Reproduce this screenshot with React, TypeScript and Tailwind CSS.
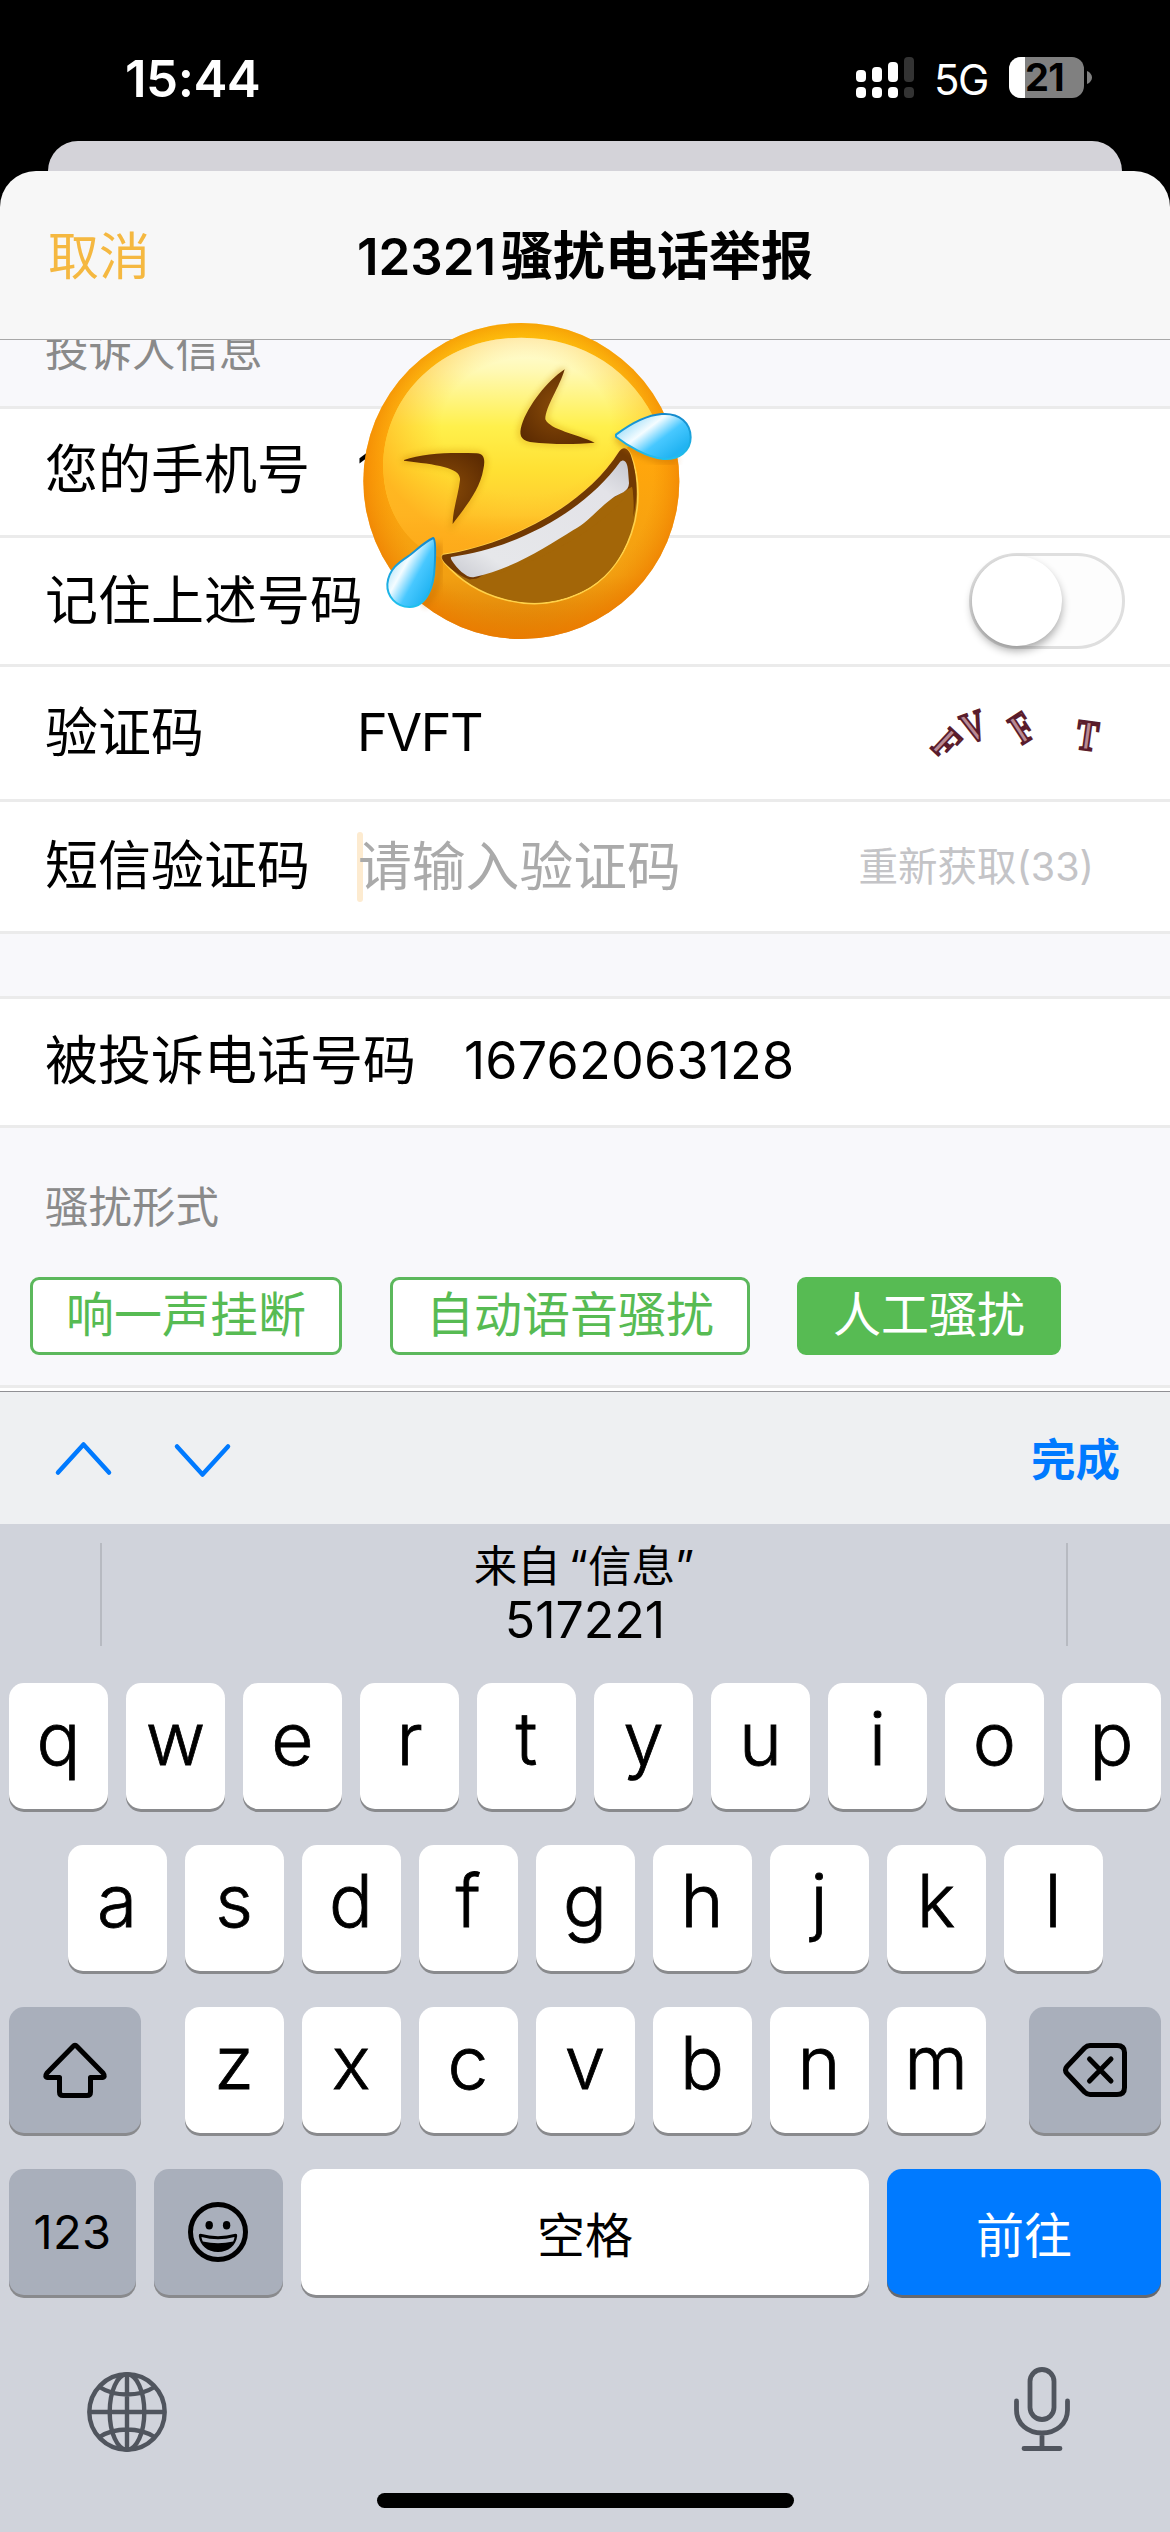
import type { ReactNode } from "react";

function StatusBar() {
  return (
    <div className="flex h-[141px] shrink-0 items-start bg-black text-white">
      <div className="ml-[125px] mt-[53px] w-[150px] text-[51px] leading-[51px] font-semibold tracking-[-0.5px]">15:44</div>
      <svg className="ml-[581px] mt-[57px]" width="58" height="41" viewBox="0 0 58 41">
        <g fill="#fff">
          <rect x="0" y="13" width="10" height="12" rx="4" />
          <rect x="16" y="10" width="10" height="15" rx="4" />
          <rect x="32" y="5" width="10" height="20" rx="4" />
          <rect x="0" y="30" width="10" height="11" rx="4" />
          <rect x="16" y="30" width="10" height="11" rx="4" />
          <rect x="32" y="30" width="10" height="11" rx="4" />
        </g>
        <g fill="#333">
          <rect x="48" y="0" width="10" height="25" rx="4" />
          <rect x="48" y="30" width="10" height="11" rx="4" />
        </g>
      </svg>
      <div className="ml-[20px] mt-[59px] w-[56px] text-[42px] leading-[42px] tracking-[-1.5px]">5G</div>
      <div className="ml-[19px] mt-[57px] flex h-[41px] w-[75px] rounded-[12px] bg-[#808080]">
        <div className="h-full w-[16px] rounded-l-[12px] bg-white" />
        <div className="text-[38px] leading-[41px] font-bold tracking-[-0.8px] text-black">21</div>
      </div>
      <svg className="ml-[3px] mt-[71px]" width="5" height="13" viewBox="0 0 5 13">
        <path d="M0 0C3 1 5 4 5 6.500S3 12 0 13Z" fill="#808080" />
      </svg>
    </div>
  );
}

function LaughingFace() {
  return (
    <svg className="absolute left-[340px] top-[139px]" width="380" height="350" viewBox="0 0 1140 1050">
      <defs>
        <linearGradient id="rim" x1="0" y1="0" x2="0" y2="1">
          <stop offset="0" stopColor="#ffc60c" />
          <stop offset="0.15" stopColor="#ffbd12" />
          <stop offset="0.45" stopColor="#ffa60c" />
          <stop offset="0.8" stopColor="#f2a012" />
          <stop offset="1" stopColor="#d97a05" />
        </linearGradient>
        <radialGradient id="edge" cx="0.5" cy="0.48" r="0.52">
          <stop offset="0.8" stopColor="#f28a00" stopOpacity="0" />
          <stop offset="1" stopColor="#ee7c00" stopOpacity="0.8" />
        </radialGradient>
        <linearGradient id="glow" x1="0" y1="0" x2="0" y2="1">
          <stop offset="0" stopColor="#fffde0" />
          <stop offset="0.15" stopColor="#fff9b4" />
          <stop offset="0.4" stopColor="#fff04c" />
          <stop offset="0.6" stopColor="#ffe033" />
          <stop offset="0.8" stopColor="#ffcb30" />
          <stop offset="1" stopColor="#ffb820" stopOpacity="0" />
        </linearGradient>
        <radialGradient id="sides" cx="0.52" cy="0.4" r="0.56">
          <stop offset="0.55" stopColor="#ffc020" stopOpacity="0" />
          <stop offset="1" stopColor="#ffac1c" stopOpacity="0.75" />
        </radialGradient>
        <linearGradient id="teeth" x1="0" y1="1" x2="1" y2="0">
          <stop offset="0" stopColor="#c8c9d0" />
          <stop offset="0.2" stopColor="#e6e7ea" />
          <stop offset="0.8" stopColor="#e3e3e8" />
          <stop offset="1" stopColor="#c6c7cf" />
        </linearGradient>
        <linearGradient id="dropA" x1="0.1" y1="0.2" x2="0.85" y2="0.8">
          <stop offset="0" stopColor="#9adcf8" />
          <stop offset="0.35" stopColor="#f4fcff" />
          <stop offset="0.65" stopColor="#48c8ff" />
          <stop offset="1" stopColor="#22b4f2" />
        </linearGradient>
        <linearGradient id="tearRim" x1="0" y1="0" x2="0" y2="1">
          <stop offset="0" stopColor="#1589cc" />
          <stop offset="1" stopColor="#20c0ee" />
        </linearGradient>
        <radialGradient id="eye" cx="0.5" cy="0.5" r="0.6">
          <stop offset="0" stopColor="#8a4c08" />
          <stop offset="1" stopColor="#5e2c02" />
        </radialGradient>
        <filter id="soft" x="-20%" y="-20%" width="140%" height="140%">
          <feGaussianBlur stdDeviation="9" />
        </filter>
      </defs>
      <circle cx="544" cy="513" r="474" fill="url(#rim)" />
      <circle cx="544" cy="513" r="474" fill="url(#edge)" />
      <path d="M544 83C300 83 130 262 130 470C130 610 215 730 330 750C470 730 700 620 850 420L955 350C880 180 730 83 544 83Z" fill="url(#glow)" />
      <path d="M544 83C300 83 130 262 130 470C130 610 215 730 330 750C470 730 700 620 850 420L955 350C880 180 730 83 544 83Z" fill="url(#sides)" />
      <g fill="none" stroke="#c98200" strokeWidth="12" opacity="0.45" filter="url(#soft)">
        <path d="M192 450C250 428 340 424 410 430C450 434 432 480 420 510C405 555 360 610 338 642C342 600 350 550 360 505C364 470 290 464 192 452Z" />
        <path d="M672 178C650 230 620 290 616 325C630 360 710 375 764 398C700 404 640 404 570 396C535 390 536 372 545 345C565 290 620 220 672 178Z" />
      </g>
      <path d="M192 450C250 428 340 427 410 430C434 432 436 450 430 478C420 545 360 610 338 642C338 600 356 550 360 510C364 472 290 464 192 452Z" fill="url(#eye)" />
      <path d="M674 178C660 230 616 290 616 328C630 360 710 372 764 398C700 404 640 404 570 396C540 390 537 372 545 345C565 285 620 215 674 178Z" fill="url(#eye)" />
      <path d="M310 734C470 710 720 610 838 424C850 408 864 414 872 434C930 580 870 780 720 850C570 920 400 860 314 758C304 746 302 738 310 734Z" fill="#a36608" stroke="#ffd24a" strokeWidth="5" />
      <path d="M310 734C470 710 720 610 838 424C850 408 864 414 872 434C892 490 894 560 880 620C882 580 880 550 876 530L400 812C365 802 335 780 314 758C304 746 302 738 310 734Z" fill="#713903" />
      <path d="M876 530C900 700 810 850 620 876C530 888 420 850 390 808C480 806 790 680 876 530Z" fill="#a36608" />
      <path d="M338 740C520 715 730 610 840 456C852 444 862 456 864 480L867 520C866 548 840 548 815 566C770 600 740 640 700 660C620 710 520 776 400 802C380 804 350 775 336 752C330 742 332 740 338 740Z" fill="url(#teeth)" />
      <path d="M830 378C860 420 960 462 1010 446" fill="none" stroke="#c06c00" strokeWidth="22" opacity="0.45" filter="url(#soft)" />
      <path d="M828 374C860 350 910 316 965 312C1020 308 1052 340 1052 382C1052 425 1015 450 970 447C920 442 860 405 828 380Z" fill="url(#dropA)" stroke="url(#tearRim)" strokeWidth="6" strokeLinejoin="round" />
      <path d="M294 700C300 780 300 840 250 885" fill="none" stroke="#c06c00" strokeWidth="22" opacity="0.45" filter="url(#soft)" />
      <path d="M280 684C288 690 286 735 284 770C282 825 262 890 210 891C168 892 140 858 142 822C146 775 180 755 210 735C235 715 255 695 280 684Z" fill="url(#dropA)" stroke="url(#tearRim)" strokeWidth="6" strokeLinejoin="round" />
    </svg>
  );
}

function Header() {
  return (
    <div className="relative flex h-[169px] shrink-0 items-center justify-center rounded-t-[36px] border-b border-[#a8a8a8] bg-[#f7f7f7]">
      <div className="absolute left-[48px] top-[60px] text-[51px] leading-[51px] text-[#f5b840]">取消</div>
      <h1 className="pt-[2px] text-[51px] leading-[51px] font-semibold">
        <span>12321</span>
        <span className="ml-[5px] text-[52px]">骚扰电话举报</span>
      </h1>
    </div>
  );
}

function Row({ label, height, nudge = "", children }: { label: string; height: string; nudge?: string; children?: ReactNode }) {
  return (
    <div className={"flex items-center border-b-[3px] border-[#ebebeb] bg-white pl-[45px] text-[53px] leading-[53px] text-black " + height}>
      <div className={"min-w-[312px] whitespace-nowrap " + nudge}>{label}</div>
      {children}
    </div>
  );
}

function Captcha() {
  return (
    <div className="relative ml-auto mr-[60px] h-[75px] w-[190px] font-['Liberation_Serif'] text-[43px] leading-[43px] font-bold text-[#b98a94] [-webkit-text-stroke:2.4px_#5a1c2c]">
      <span className="absolute left-[14px] top-[26px] rotate-[43deg] scale-x-75">F</span>
      <span className="absolute left-[38px] top-[9px] rotate-[-20deg] scale-x-75">V</span>
      <span className="absolute left-[89px] top-[10px] rotate-[-33deg] scale-x-75">F</span>
      <span className="absolute left-[153px] top-[18px] rotate-[8deg] scale-x-75">T</span>
    </div>
  );
}

function Form() {
  return (
    <div className="flex h-[1051px] shrink-0 flex-col overflow-hidden bg-[#f8f8fb]">
      <div className="h-[69px] shrink-0 border-b-[3px] border-[#ebebeb] pl-[45px]">
        <div className="-mt-[11px] text-[43.500px] leading-[44px] text-[#8a8a8a]">投诉人信息</div>
      </div>
      <Row label="您的手机号" height="h-[129px]" nudge="pb-[3px]">
        <div className="tracking-[-1.5px]">1</div>
      </Row>
      <Row label="记住上述号码" height="h-[129px]">
        <div className="ml-auto mr-[45px] h-[96px] w-[156px] rounded-full border-[3px] border-[#dfdfdf] bg-[#fdfdfd]">
          <div className="size-[90px] rounded-full bg-white shadow-[0_5px_9px_rgba(0,0,0,0.32)]" />
        </div>
      </Row>
      <Row label="验证码" height="h-[135px]">
        <div className="pb-[2px] text-[52px] tracking-[-1.4px]">FVFT</div>
        <Captcha />
      </Row>
      <Row label="短信验证码" height="h-[132px]">
        <div className="h-[70px] w-[6px] rounded-full bg-[#fdebd0]" />
        <div className="-ml-[5px] text-[53.800px] text-[#aaaaaa]">请输入验证码</div>
        <div className="ml-auto mr-[76px] pt-[1px] text-[39.500px] text-[#c4c4c7]">重新获取(33)</div>
      </Row>
      <div className="h-[65px] shrink-0 border-b-[3px] border-[#ebebeb]" />
      <Row label="被投诉电话号码" height="h-[129px]" nudge="pb-[2px]">
        <div className="ml-[48px] pb-[4px] text-[52px] tracking-[0.2px]">16762063128</div>
      </Row>
      <div className="flex h-[260px] shrink-0 flex-col border-b-[3px] border-[#ebebeb]">
        <div className="ml-[45px] mt-[57px] text-[43.500px] leading-[44px] text-[#8a8a8a]">骚扰形式</div>
        <div className="ml-[30px] mt-[48px] flex text-[48px] leading-[70px] text-[#57bb53]">
          <div className="h-[78px] w-[312px] rounded-[9px] border-[3px] border-[#5cb85c] bg-white text-center">响一声挂断</div>
          <div className="ml-[48px] h-[78px] w-[360px] rounded-[9px] border-[3px] border-[#5cb85c] bg-white text-center">自动语音骚扰</div>
          <div className="ml-[47px] h-[78px] w-[264px] rounded-[9px] border-[3px] border-[#57bb53] bg-[#57bb53] text-center text-white">人工骚扰</div>
        </div>
      </div>
      <div className="flex-1 bg-white" />
    </div>
  );
}

function Toolbar() {
  return (
    <div className="flex h-[133px] shrink-0 items-center border-t border-[#909094] bg-[#eef0f2]">
      <svg className="ml-[54px]" width="180" height="40" viewBox="0 0 180 40" fill="none" stroke="#007aff" strokeWidth="4.500" strokeLinecap="round" strokeLinejoin="round">
        <path d="M4 34.500L29.500 6.500L55 34.500" />
        <path d="M123 8.500L148.500 36.500L174 8.500" />
      </svg>
      <div className="ml-auto mr-[50px] pt-[4px] text-[44.500px] leading-[46px] font-semibold text-[#007aff]">完成</div>
    </div>
  );
}

function Key({ label }: { label: string }) {
  return (
    <div className="h-[126px] w-[99px] rounded-[15px] bg-white text-center text-[73px] leading-[111px] font-light shadow-[0_3px_0_#898a8d] [-webkit-text-stroke:0.8px_#000]">
      {label}
    </div>
  );
}

function Keyboard() {
  return (
    <div className="flex flex-1 flex-col bg-[#d0d3db] text-black">
      <div className="ml-[100px] mr-[102px] mt-[19px] flex h-[103px] flex-col items-center border-x-2 border-[#b7bac1]">
        <div className="mt-[1px] text-[43.500px] leading-[44px]">来自<span className="ml-[8px] [font-feature-settings:'palt']">“信息”</span></div>
        <div className="mt-[7px] pl-[2px] text-[50px] leading-[50px]">517221</div>
      </div>
      <div className="mt-[37px] flex h-[126px] justify-center gap-[18px]">
        {"qwertyuiop".split("").map((c) => <Key key={c} label={c} />)}
      </div>
      <div className="mt-[36px] flex h-[126px] justify-center gap-[18px]">
        {"asdfghjkl".split("").map((c) => <Key key={c} label={c} />)}
      </div>
      <div className="mx-[9px] mt-[36px] flex h-[126px] justify-between">
        <div className="flex h-[126px] w-[132px] items-center justify-center rounded-[15px] bg-[#a9afbb] shadow-[0_3px_0_#898a8d]">
          <svg width="66" height="58" viewBox="0 0 66 58" fill="none" stroke="#000" strokeWidth="5" strokeLinejoin="round">
            <path d="M31 5.500Q33 3 35 5.500L61 32Q64 36 60 36.500H48.500V51Q48.500 54.500 45 54.500H21Q17.500 54.500 17.500 51V36.500H6Q2 36 5 32Z" />
          </svg>
        </div>
        <div className="flex gap-[18px]">
          {"zxcvbnm".split("").map((c) => <Key key={c} label={c} />)}
        </div>
        <div className="flex h-[126px] w-[132px] items-center justify-center rounded-[15px] bg-[#a9afbb] shadow-[0_3px_0_#898a8d]">
          <svg width="66" height="56" viewBox="0 0 66 56" fill="none" stroke="#000" strokeWidth="5" strokeLinejoin="round" strokeLinecap="round">
            <path d="M28 3.500H55Q62.500 3.500 62.500 10.500V45.500Q62.500 52.500 55 52.500H28Q25 52.500 22.500 50L5 31.500Q2 28 5 24.500L22.500 6Q25 3.500 28 3.500Z" />
            <path d="M27.500 17L49 39M49 17L27.500 39" />
          </svg>
        </div>
      </div>
      <div className="mx-[9px] mt-[36px] flex h-[126px] gap-[18px]">
        <div className="h-[126px] w-[127px] rounded-[15px] bg-[#a9afbb] text-center text-[47px] leading-[126px] tracking-[0.4px] shadow-[0_3px_0_#898a8d]">123</div>
        <div className="flex h-[126px] w-[129px] items-center justify-center rounded-[15px] bg-[#a9afbb] pr-[2px] shadow-[0_3px_0_#898a8d]">
          <svg width="60" height="60" viewBox="0 0 60 60">
            <circle cx="30" cy="30" r="27.500" fill="none" stroke="#000" strokeWidth="5" />
            <ellipse cx="21.200" cy="23.300" rx="3.700" ry="4.200" />
            <ellipse cx="38.600" cy="23.300" rx="3.700" ry="4.200" />
            <path d="M12.500 31.800Q30 36.500 47.500 31.800Q49.500 31.800 49.200 34C48 43.500 40.500 50 30 50S12 43.500 10.800 34Q10.500 31.800 12.500 31.800Z" />
            <path d="M13.500 35Q30 39.500 46.500 35Q46.300 37.500 45.200 39.500Q30 43 14.800 39.500Q13.700 37.500 13.500 35Z" fill="#a9afbb" />
          </svg>
        </div>
        <div className="h-[126px] w-[568px] rounded-[15px] bg-white pt-[4px] text-center text-[48px] leading-[126px] shadow-[0_3px_0_#898a8d]">空格</div>
        <div className="h-[126px] w-[274px] rounded-[15px] bg-[#007aff] pt-[4px] text-center text-[48px] leading-[126px] text-white shadow-[0_3px_0_#66696f]">前往</div>
      </div>
      <div className="mt-[72px] flex justify-between pl-[87px] pr-[100px]">
        <svg className="mt-[5px]" width="80" height="80" viewBox="0 0 80 80" fill="none" stroke="#50555e" strokeWidth="4.400">
          <circle cx="40" cy="40" r="37.700" />
          <ellipse cx="40" cy="40" rx="17.300" ry="37.700" />
          <path d="M40 2V78M2 40H78M12.500 15Q24 22.500 40 22.500T67.500 15M12.500 65Q24 57.500 40 57.500T67.500 65" />
        </svg>
        <svg width="56" height="85" viewBox="0 0 56 85" fill="none" stroke="#50555e" strokeWidth="4.800" strokeLinecap="round">
          <rect x="16" y="2.500" width="24" height="50" rx="12" />
          <path d="M2.500 34V43C2.500 57 14 66 28 66S53.500 57 53.500 43V34M28 66V81M10 81.500H46" />
        </svg>
      </div>
      <div className="mx-auto mt-[41px] h-[15px] w-[417px] rounded-full bg-black" />
    </div>
  );
}

export default function App() {
  return (
    <div className="flex h-[2532px] w-[1170px] flex-col overflow-hidden bg-black font-['Inter','Noto_Sans_CJK_SC',sans-serif]">
      <StatusBar />
      <div className="mx-[48px] h-[30px] shrink-0 rounded-t-[30px] bg-[#d4d3d9]" />
      <div className="relative flex flex-1 flex-col">
        <Header />
        <Form />
        <Toolbar />
        <Keyboard />
        <LaughingFace />
      </div>
    </div>
  );
}
